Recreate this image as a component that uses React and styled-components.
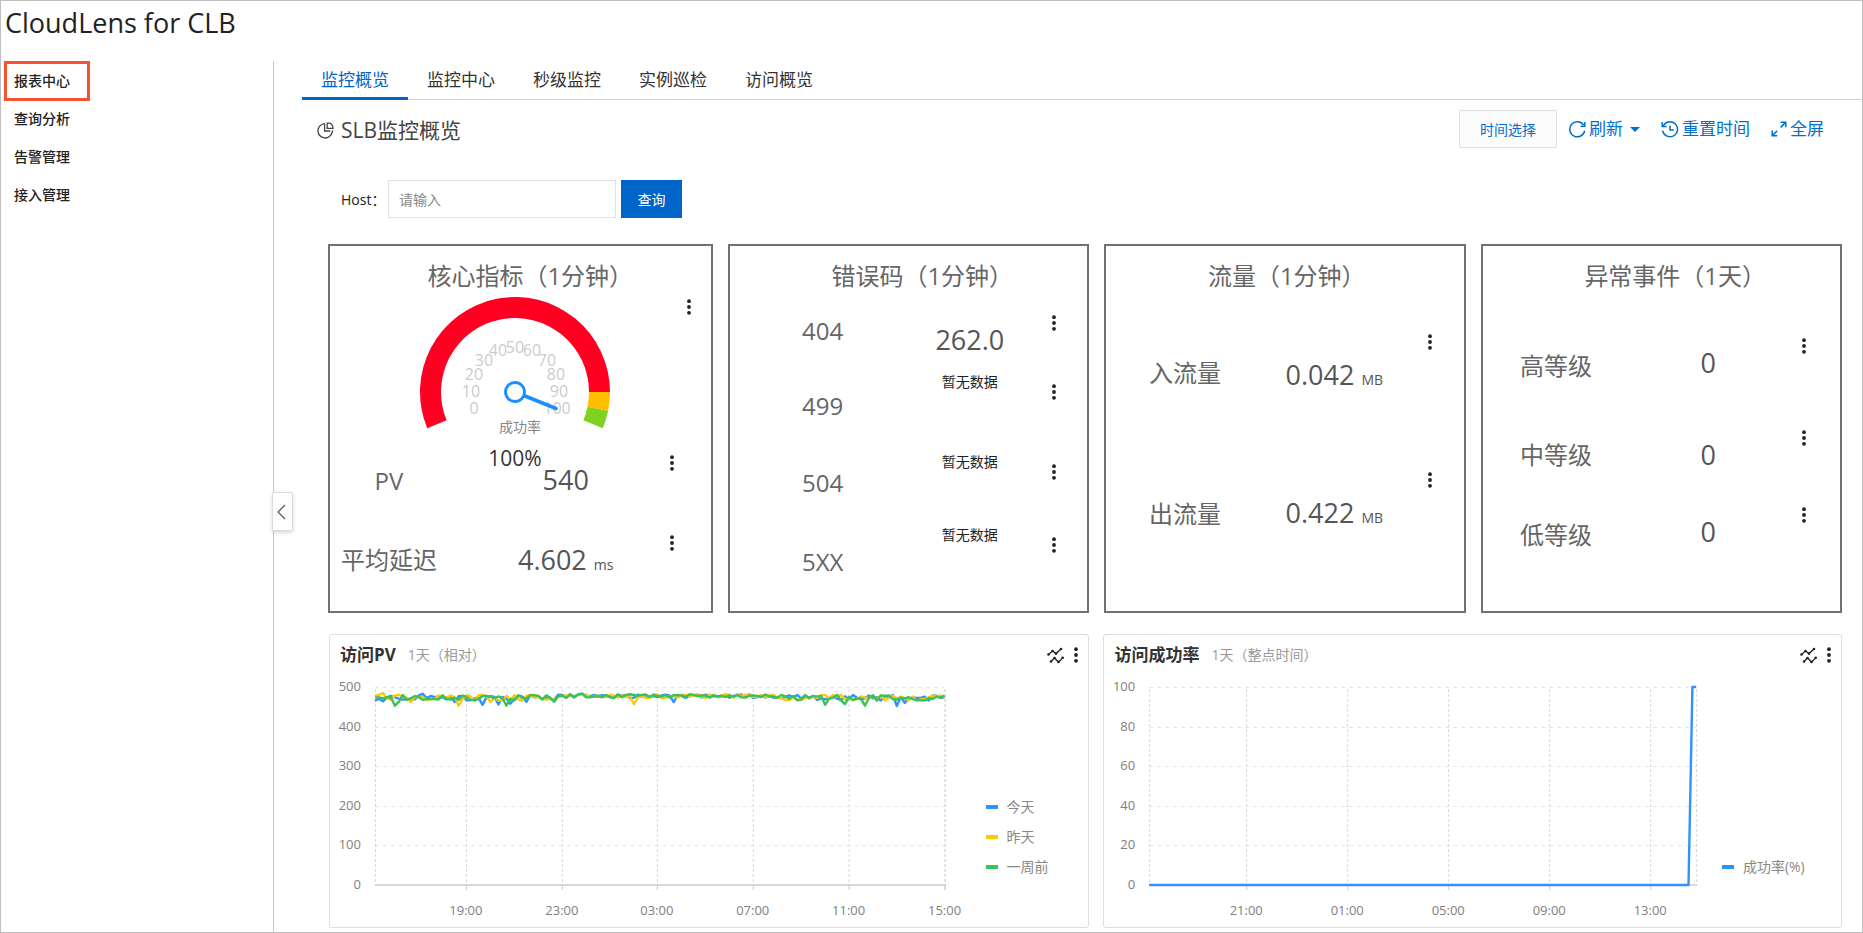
import React from "react";
import styled, { createGlobalStyle } from "styled-components";

const GlobalStyle = createGlobalStyle`
  *, *::before, *::after { box-sizing: border-box; }
  body {
    margin: 0;
    background: #fff;
    color: #333;
    font-family: "Open Sans", "Noto Sans CJK SC", sans-serif;
    font-size: 14px;
  }
  button, input { font: inherit; }
  button {
    margin: 0;
    padding: 0;
    border: 0;
    background: none;
    color: inherit;
    cursor: pointer;
  }
  h1, h2, h3 { margin: 0; font-weight: 400; }
`;

const BLUE = "#0064c8";
const SERIES = { blue: "#3390ff", yellow: "#fdc70c", green: "#3ac158" };

/* ---------- page frame ---------- */

const Page = styled.div`
  min-height: 100vh;
  display: flex;
  flex-direction: column;
  border: 1px solid #bfbfbf;
`;

const PageHeader = styled.header`
  height: 60px;
  padding: 2px 4px;
`;

const PageTitle = styled.h1`
  font-size: 27px;
  line-height: 40px;
  color: #222;
`;

const Columns = styled.div`
  flex: 1;
  display: flex;
`;

const Sidebar = styled.nav`
  position: relative;
  flex: 0 0 273px;
  padding: 1px 0 0 4px;
  border-right: 1px solid #ccc;
`;

const SideLink = styled.a`
  display: block;
  width: 84px;
  padding-left: 9px;
  line-height: 38px;
  font-weight: 500;
  color: #222;
  text-decoration: none;
  outline: ${(p) => (p.$active ? "3px solid #f5532f" : "none")};
  outline-offset: -2px;
`;

const CollapseButton = styled.button`
  position: absolute;
  top: 431px;
  right: -20px;
  width: 21px;
  height: 39px;
  display: grid;
  place-items: center;
  padding-right: 2px;
  background: #fff;
  border: 1px solid #d8dce2;
  border-radius: 2px;
  box-shadow: 0 2px 4px rgba(0, 0, 0, 0.14);
  color: #555;
`;

const Main = styled.main`
  flex: 1;
  min-width: 0;
`;

/* ---------- tabs, toolbar, filter ---------- */

const Tabs = styled.div`
  display: flex;
  height: 39px;
  margin-left: 28px;
  border-bottom: 1px solid #d4d4d4;
`;

const Tab = styled.button`
  height: 39px;
  padding: 2px 19px 0;
  font-size: 17px;
  line-height: 34px;
  color: ${(p) => (p.$active ? BLUE : "#333")};
  border-bottom: 3px solid ${(p) => (p.$active ? BLUE : "transparent")};
`;

const Toolbar = styled.div`
  display: flex;
  align-items: center;
  justify-content: space-between;
  padding: 10px 38px 0 43px;
`;

const DashboardTitle = styled.h2`
  display: flex;
  align-items: center;
  gap: 7px;
  padding-top: 2px;
  font-size: 21px;
  line-height: 36px;
  color: #444;
`;

const Actions = styled.div`
  display: flex;
  align-items: center;
  gap: ${(p) => p.$gap}px;
`;

const TimeButton = styled.button`
  width: 98px;
  height: 38px;
  border: 1px solid #dedede;
  border-radius: 2px;
  background: #fcfcfc;
  color: #0070cc;
`;

const Action = styled.button`
  display: flex;
  align-items: center;
  gap: 3px;
  font-size: 17px;
  line-height: 34px;
  color: #0070cc;
`;

const Caret = styled.span`
  margin-left: 4px;
  border: 5px solid transparent;
  border-top-color: currentColor;
  border-bottom: 0;
`;

const FilterBar = styled.form`
  display: flex;
  align-items: center;
  gap: 5px;
  padding: 32px 0 26px 67px;
`;

const FilterLabel = styled.label`
  width: 42px;
  color: #222;
  white-space: nowrap;
`;

const FilterInput = styled.input`
  width: 228px;
  height: 38px;
  padding: 0 10px;
  border: 1px solid #e3e3e3;
  border-radius: 0;
  outline: none;
  &::placeholder { color: #888; opacity: 1; }
`;

const QueryButton = styled.button`
  width: 61px;
  height: 38px;
  background: ${BLUE};
  color: #fff;
`;

/* ---------- stat panels ---------- */

const StatGrid = styled.div`
  display: grid;
  grid-template-columns: 384fr 361fr 361fr 361fr;
  gap: 15px;
  padding: 0 20px 21px 54px;
`;

const StatPanel = styled.section`
  min-height: 369px;
  border: 2px solid #717171;
`;

const StatTitle = styled.h3`
  padding: 10px 0 0 ${(p) => p.$indent}px;
  font-size: 24px;
  line-height: 40px;
  text-align: center;
  color: #666;
`;

const StatBody = styled.div`
  display: grid;
  grid-template-columns: ${(p) => p.$columns};
`;

const Stack = styled.div`
  padding-top: ${(p) => p.$top}px;
`;

const StatLabel = styled.div`
  height: ${(p) => p.$height}px;
  font-size: 24px;
  line-height: 50px;
  text-align: center;
  white-space: nowrap;
  color: #666;
`;

const Tile = styled.div`
  position: relative;
  height: ${(p) => p.$height}px;
  text-align: center;
`;

const StatValue = styled.div`
  font-size: 27px;
  line-height: ${(p) => p.$line}px;
  color: #555;
`;

const Unit = styled.span`
  margin-left: 7px;
  font-size: 14px;
`;

const NoData = styled.div`
  line-height: 14px;
  color: #222;
`;

const MenuButton = styled.button`
  width: 24px;
  height: 34px;
  display: grid;
  place-items: center;
  color: #222;
`;

const TileMenu = styled(MenuButton)`
  position: absolute;
  top: 0;
  right: 0;
`;

const GaugeRow = styled.div`
  display: grid;
  grid-template-columns: 1fr 200px 1fr;
  height: 150px;
  padding-right: 10px;
  & > svg { grid-column: 2; overflow: visible; }
  & > button { justify-self: end; margin-top: -6px; }
`;

/* ---------- chart panels ---------- */

const ChartGrid = styled.div`
  display: grid;
  grid-template-columns: 761fr 739fr;
  gap: 14px;
  padding: 0 20px 4px 55px;
`;

const ChartPanel = styled.section`
  border: 1px solid #dadfe5;
  border-radius: 3px;
`;

const ChartHeader = styled.div`
  display: flex;
  align-items: center;
  height: 40px;
  padding: 0 0 0 10px;
`;

const ChartTitle = styled.h3`
  font-size: 17px;
  font-weight: 700;
  line-height: 38px;
  color: #333;
`;

const ChartRange = styled.span`
  flex: 1;
  margin-left: 12px;
  line-height: 38px;
  color: #999;
`;

const CompareButton = styled.button`
  display: grid;
  place-items: center;
  width: 18px;
  height: 34px;
`;

const ChartBody = styled.div`
  display: grid;
  grid-template-columns: ${(p) => p.$columns};
  height: 252px;
  & > svg { display: block; width: 100%; height: 252px; }
`;

const Legend = styled.ul`
  align-self: end;
  margin: 0;
  padding: 0 0 45px ${(p) => p.$inset}px;
  list-style: none;
`;

const LegendItem = styled.li`
  display: flex;
  align-items: center;
  gap: 9px;
  line-height: 30px;
  white-space: nowrap;
  color: #888;
  &::before {
    content: "";
    width: 12px;
    height: 4px;
    background: ${(p) => p.$color};
  }
`;

/* ---------- icons ---------- */

const Dots = () => (
  <svg width="6" height="16" viewBox="0 0 6 16" fill="currentColor" aria-hidden="true">
    <circle cx="3" cy="2.2" r="1.9" />
    <circle cx="3" cy="8" r="1.9" />
    <circle cx="3" cy="13.8" r="1.9" />
  </svg>
);

const PieIcon = () => (
  <svg width="17" height="17" viewBox="0 0 17 17" fill="none" stroke="currentColor" strokeWidth="1.3" aria-hidden="true">
    <path d="M7.6 1.6A7.2 7.2 0 1 0 15.2 10.2" />
    <path d="M7.6 1.6V9H13.2" />
    <path d="M10.2 1.2H12.4Q15.8 2.2 16 6.4H10.2Z" />
    <path d="M15.2 10.2Q15.6 9.2 15.5 8.4" />
  </svg>
);

const RefreshIcon = () => (
  <svg width="17" height="17" viewBox="0 0 17 17" fill="none" stroke="currentColor" strokeWidth="1.5" aria-hidden="true">
    <path d="M15.7 9.6A7.5 7.5 0 1 1 14.6 4.2" />
    <path d="M15.8 1V5.2H11.6" />
  </svg>
);

const HistoryIcon = () => (
  <svg width="18" height="17" viewBox="0 0 18 17" fill="none" stroke="currentColor" strokeWidth="1.5" aria-hidden="true">
    <path d="M1.6 9.6A7.5 7.5 0 1 0 3 3.8L1.6 5.2" />
    <path d="M1.2 1V5.4H5.6" />
    <path d="M9 4.6V9H12.8" />
  </svg>
);

const ExpandIcon = () => (
  <svg width="16" height="16" viewBox="0 0 16 16" fill="none" stroke="currentColor" strokeWidth="1.5" aria-hidden="true">
    <path d="M9.6 1.2H14.8V6.2M14.6 1.4L9.6 6.4" />
    <path d="M1.2 9.6V14.8H6.2M1.4 14.6L6.2 9.8" />
  </svg>
);

const CompareIcon = () => (
  <svg width="18" height="17" viewBox="0 0 18 17" fill="none" stroke="#222" strokeWidth="1.3" aria-hidden="true">
    <path d="M2.5 7.5L6.5 4L10 6.6L15 2" />
    <path d="M5 14.5L8.5 11L12.5 15L17 10.6" />
    <g fill="#222" stroke="none">
      {[[2.5, 7.5], [6.5, 4], [10, 6.6], [15, 2], [5, 14.5], [8.5, 11], [12.5, 15], [16.7, 10.8]].map(([x, y]) => (
        <circle key={`${x}-${y}`} cx={x} cy={y} r="1.3" />
      ))}
    </g>
  </svg>
);

/* ---------- gauge ---------- */

const polar = (cx, cy, r, deg) => {
  const a = (deg * Math.PI) / 180;
  return [cx + r * Math.cos(a), cy - r * Math.sin(a)];
};

const ringPath = (cx, cy, outer, inner, from, to) => {
  const [x1, y1] = polar(cx, cy, outer, from);
  const [x2, y2] = polar(cx, cy, outer, to);
  const [x3, y3] = polar(cx, cy, inner, to);
  const [x4, y4] = polar(cx, cy, inner, from);
  const large = from - to > 180 ? 1 : 0;
  return `M${x1} ${y1}A${outer} ${outer} 0 ${large} 1 ${x2} ${y2}L${x3} ${y3}A${inner} ${inner} 0 ${large} 0 ${x4} ${y4}Z`;
};

const GAUGE_MARKS = [
  [0, 59, 112], [10, 56, 95], [20, 59, 78], [30, 69, 64], [40, 83, 54], [50, 100, 51],
  [60, 117, 54], [70, 132, 64], [80, 141, 78], [90, 144, 95], [100, 142, 112],
];

const Gauge = () => (
  <svg width="200" height="150" viewBox="0 0 200 150" role="img" aria-label="成功率 100%">
    <path d={ringPath(100, 96, 95, 74, 202.5, 0)} fill="#ff0022" />
    <path d={ringPath(100, 96, 95, 74, 0, -11.5)} fill="#ffbf00" />
    <path d={ringPath(100, 96, 95, 74, -11.5, -22.5)} fill="#7ed321" />
    <g fill="#ccc" fontSize="16" textAnchor="middle">
      {GAUGE_MARKS.map(([v, x, y]) => (
        <text key={v} x={x} y={y + 6}>{v}</text>
      ))}
    </g>
    <path d="M110 100L141 112.5" stroke="#1890ff" strokeWidth="3.6" strokeLinecap="round" />
    <circle cx="100" cy="96" r="9.5" fill="#fff" stroke="#1890ff" strokeWidth="2.8" />
    <text x="105" y="136" fontSize="14" fill="#888" textAnchor="middle">成功率</text>
    <text x="100" y="170" fontSize="21" fill="#333" textAnchor="middle">100%</text>
  </svg>
);

/* ---------- line charts ---------- */

const makeSeries = (seed, count, marks) => {
  let s = seed;
  const out = [];
  for (let i = 0; i < count; i += 1) {
    s = (s * 16807) % 2147483647;
    const calm = i > 45 && i < 102;
    const base = calm ? 477 : 473;
    const noise = (s / 2147483647 - 0.5) * (calm ? 10 : 15);
    out.push(i in marks ? marks[i] : base + noise);
  }
  return out;
};

const PV_SERIES = [
  { name: "今天", color: SERIES.blue, data: makeSeries(71, 144, { 2: 464, 12: 483, 20: 462, 27: 455, 31: 456, 34: 458, 38: 463, 75: 462, 120: 480, 131: 452, 133: 460 }) },
  { name: "昨天", color: SERIES.yellow, data: makeSeries(1913, 144, { 0: 478, 1: 480, 2: 485, 9: 462, 21: 453, 22: 470, 29: 463, 65: 457, 115: 480 }) },
  { name: "一周前", color: SERIES.green, data: makeSeries(40127, 144, { 0: 474, 1: 474, 2: 472, 3: 474, 4: 475, 5: 453, 6: 463, 7: 480, 33: 453, 34: 470, 45: 463, 52: 484, 107: 468, 113: 455, 118: 457, 123: 453 }) },
];

const RATE_POINTS = [[0, 0], [0.986, 0], [0.993, 100], [1, 100]];

const toPoints = (data) => data.map((v, i) => [i / (data.length - 1), v]);

const LineChart = ({ width, left, right, labelX, yMax, yStep, ticks, series, edgeTick, label }) => {
  const top = 12;
  const bottom = 210;
  const yOf = (v) => bottom - (v / yMax) * (bottom - top);
  const xOf = (f) => left + f * (right - left);
  const levels = [];
  for (let v = 0; v <= yMax; v += yStep) levels.push(v);
  return (
    <svg viewBox={`0 0 ${width} 252`} role="img" aria-label={label}>
      <g stroke="#e6e6e6" strokeDasharray="4 4">
        {levels.slice(1).map((v) => (
          <path key={v} d={`M${left} ${Math.round(yOf(v)) + 0.5}H${right}`} />
        ))}
      </g>
      <g stroke="#d9d9d9" strokeDasharray="3 2">
        {[left, ...ticks.map((t) => t[1]), right].map((x, i) => (
          <path key={i} d={`M${x + 0.5} ${top + 2}V${bottom}`} />
        ))}
      </g>
      <path d={`M${left} ${bottom}H${right + 1}`} stroke="#ccc" strokeWidth="1.5" />
      <g stroke="#ccc">
        {ticks.map(([t, x]) => (
          <path key={t} d={`M${x + 0.5} ${bottom}V${bottom + 5}`} />
        ))}
        {edgeTick && <path d={`M${right + 0.5} ${bottom}V${bottom + 5}`} />}
      </g>
      <g fill="#808080" fontSize="13">
        {levels.map((v) => (
          <text key={v} x={labelX} y={yOf(v) + 4} textAnchor="end">{v}</text>
        ))}
        {ticks.map(([t, x]) => (
          <text key={t} x={x} y="240" textAnchor="middle">{t}</text>
        ))}
      </g>
      {series.map((s) => (
        <polyline
          key={s.name}
          fill="none"
          stroke={s.color}
          strokeWidth="2.4"
          strokeLinejoin="round"
          points={s.points.map(([f, v]) => `${xOf(f).toFixed(1)},${yOf(v).toFixed(1)}`).join(" ")}
        />
      ))}
    </svg>
  );
};

/* ---------- composed parts ---------- */

const StatCard = ({ title, indent, columns, labels, labelTop, tiles, tileTop, line = 68, children }) => (
  <StatPanel>
    <StatTitle $indent={indent}>{title}</StatTitle>
    {children}
    <StatBody $columns={columns}>
      <span />
      <Stack $top={labelTop}>
        {labels.map(([text, height]) => (
          <StatLabel key={text} $height={height}>{text}</StatLabel>
        ))}
      </Stack>
      <Stack $top={tileTop}>
        {tiles.map(([value, height, unit], i) => (
          <Tile key={labels[i][0]} $height={height}>
            {value === null ? (
              <NoData>暂无数据</NoData>
            ) : (
              <StatValue $line={line}>
                {value}
                {unit && <Unit>{unit}</Unit>}
              </StatValue>
            )}
            <TileMenu type="button" aria-label={`${labels[i][0]} 菜单`}><Dots /></TileMenu>
          </Tile>
        ))}
      </Stack>
    </StatBody>
  </StatPanel>
);

const ChartCard = ({ title, range, columns, inset, legend, children }) => (
  <ChartPanel>
    <ChartHeader>
      <ChartTitle>{title}</ChartTitle>
      <ChartRange>{range}</ChartRange>
      <CompareButton type="button" aria-label="对比"><CompareIcon /></CompareButton>
      <MenuButton type="button" aria-label="菜单"><Dots /></MenuButton>
    </ChartHeader>
    <ChartBody $columns={columns}>
      {children}
      <Legend $inset={inset}>
        {legend.map(([name, color]) => (
          <LegendItem key={name} $color={color}>{name}</LegendItem>
        ))}
      </Legend>
    </ChartBody>
  </ChartPanel>
);

const NAV = ["报表中心", "查询分析", "告警管理", "接入管理"];
const TABS = ["监控概览", "监控中心", "秒级监控", "实例巡检", "访问概览"];

export default function App() {
  return (
    <Page>
      <GlobalStyle />
      <PageHeader>
        <PageTitle>CloudLens for CLB</PageTitle>
      </PageHeader>
      <Columns>
        <Sidebar>
          {NAV.map((name, i) => (
            <SideLink key={name} href="#" $active={i === 0}>{name}</SideLink>
          ))}
          <CollapseButton type="button" aria-label="收起">
            <svg width="9" height="16" viewBox="0 0 9 16" fill="none" stroke="currentColor" strokeWidth="1.2" aria-hidden="true">
              <path d="M8 1L1 8L8 15" />
            </svg>
          </CollapseButton>
        </Sidebar>
        <Main>
          <Tabs role="tablist">
            {TABS.map((name, i) => (
              <Tab key={name} type="button" role="tab" aria-selected={i === 0} $active={i === 0}>{name}</Tab>
            ))}
          </Tabs>
          <Toolbar>
            <DashboardTitle><PieIcon />SLB监控概览</DashboardTitle>
            <Actions $gap={21}>
              <Actions $gap={12}>
                <TimeButton type="button">时间选择</TimeButton>
                <Action type="button"><RefreshIcon />刷新<Caret /></Action>
              </Actions>
              <Action type="button"><HistoryIcon />重置时间</Action>
              <Action type="button"><ExpandIcon />全屏</Action>
            </Actions>
          </Toolbar>
          <FilterBar onSubmit={(e) => e.preventDefault()}>
            <FilterLabel htmlFor="host">Host：</FilterLabel>
            <FilterInput id="host" type="text" placeholder="请输入" />
            <QueryButton type="submit">查询</QueryButton>
          </FilterBar>
          <StatGrid>
            <StatCard
              title="核心指标（1分钟）"
              indent={20}
              columns="0 118fr 236fr 27fr"
              labelTop={10}
              labels={[["PV", 79], ["平均延迟", 52]]}
              tileTop={0}
              tiles={[["540", 80], ["4.602", 68, "ms"]]}
            >
              <GaugeRow>
                <Gauge />
                <MenuButton type="button" aria-label="成功率 菜单"><Dots /></MenuButton>
              </GaugeRow>
            </StatCard>
            <StatCard
              title="错误码（1分钟）"
              indent={28}
              columns="42fr 102fr 192fr 21fr"
              labelTop={10}
              labels={[["404", 75], ["499", 77], ["504", 79], ["5XX", 52]]}
              tileTop={10}
              tiles={[["262.0", 69], [null, 80], [null, 73], [null, 68]]}
            />
            <StatCard
              title="流量（1分钟）"
              indent={4}
              columns="38fr 82fr 216fr 21fr"
              labelTop={52}
              labels={[["入流量", 141], ["出流量", 52]]}
              tileTop={29}
              tiles={[["0.042", 138, "MB"], ["0.422", 100, "MB"]]}
              line={99}
            />
            <StatCard
              title="异常事件（1天）"
              indent={28}
              columns="29fr 89fr 215fr 24fr"
              labelTop={45}
              labels={[["高等级", 89], ["中等级", 80], ["低等级", 52]]}
              tileTop={33}
              tiles={[["0", 92], ["0", 77], ["0", 68]]}
            />
          </StatGrid>
          <ChartGrid>
            <ChartCard
              title="访问PV"
              range="1天（相对）"
              columns="640fr 119fr"
              inset={16}
              legend={PV_SERIES.map((s) => [s.name, s.color])}
            >
              <LineChart
                label="访问PV"
                width={640}
                left={45}
                right={615}
                labelX={31}
                yMax={500}
                yStep={100}
                edgeTick
                ticks={[["19:00", 136], ["23:00", 232], ["03:00", 327], ["07:00", 423], ["11:00", 519], ["15:00", 615]]}
                series={PV_SERIES.map((s) => ({ ...s, points: toPoints(s.data) }))}
              />
            </ChartCard>
            <ChartCard
              title="访问成功率"
              range="1天（整点时间）"
              columns="611fr 125fr"
              inset={6}
              legend={[["成功率(%)", SERIES.blue]]}
            >
              <LineChart
                label="访问成功率"
                width={611}
                left={45}
                right={592}
                labelX={31}
                yMax={100}
                yStep={20}
                ticks={[["21:00", 142], ["01:00", 243], ["05:00", 344], ["09:00", 445], ["13:00", 546]]}
                series={[{ name: "rate", color: SERIES.blue, points: RATE_POINTS }]}
              />
            </ChartCard>
          </ChartGrid>
        </Main>
      </Columns>
    </Page>
  );
}
